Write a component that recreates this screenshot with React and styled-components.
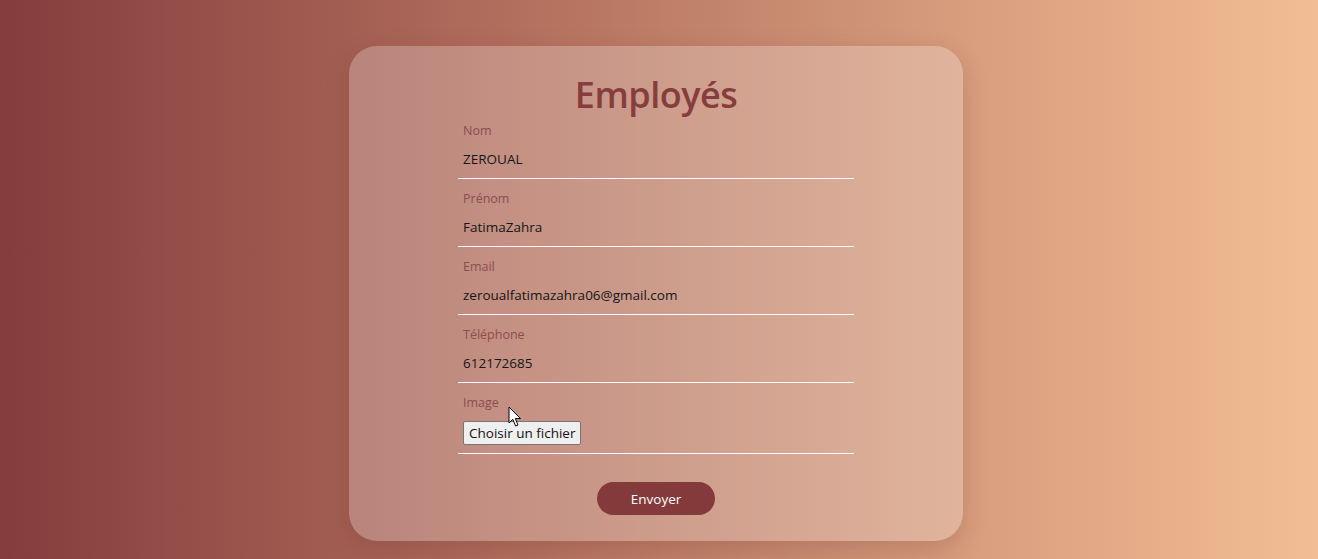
import React from 'react'
import styled, { createGlobalStyle } from 'styled-components'

const GlobalStyle = createGlobalStyle`
  html, body {
    margin: 0;
    padding: 0;
    height: 100%;
  }
  body {
    font-family: "Open Sans", "Noto Sans", sans-serif;
    overflow: hidden;
  }
`

const fields = [
  { label: 'Nom', value: 'ZEROUAL' },
  { label: 'Prénom', value: 'FatimaZahra' },
  { label: 'Email', value: 'zeroualfatimazahra06@gmail.com' },
  { label: 'Téléphone', value: '612172685' },
]

const Cursor = () => (
  <CursorIcon width="14" height="22" viewBox="0 0 14 22">
    <path
      d="M1 1 L1 17 L4.8 13.4 L7.6 20 L10 19 L7.3 12.6 L12.5 12.6 Z"
      fill="#fff"
      stroke="#000"
      strokeWidth="1"
      strokeLinejoin="round"
    />
  </CursorIcon>
)

const App = () => {
  return (
    <Page>
      <GlobalStyle />
      <Card>
        <Title>Employés</Title>
        <Form onSubmit={(e) => e.preventDefault()}>
          {fields.map((f) => (
            <Field key={f.label}>
              <Label>{f.label}</Label>
              <Input defaultValue={f.value} />
            </Field>
          ))}
          <Field>
            <Label>Image</Label>
            <FileButton type="button">Choisir un fichier</FileButton>
            <Cursor />
          </Field>
          <Actions>
            <Submit type="submit">Envoyer</Submit>
          </Actions>
        </Form>
      </Card>
    </Page>
  )
}

export default App

const Page = styled.div`
  width: 100vw;
  height: 100vh;
  box-sizing: border-box;
  padding-top: 46px;
  background: linear-gradient(to right, #853c3d 0%, #b3705e 40%, #d9a07f 75%, #f2bd94 100%);
  display: flex;
  justify-content: center;
  align-items: flex-start;
`

const Card = styled.div`
  width: 614px;
  height: 495px;
  box-sizing: border-box;
  margin-right: 6px;
  padding-top: 33px;
  border-radius: 28px;
  background-color: rgba(255, 255, 255, 0.24);
  box-shadow: 0 8px 24px rgba(90, 30, 30, 0.18);
  display: flex;
  flex-direction: column;
  align-items: center;
`

const Title = styled.h1`
  margin: 0;
  font-size: 36px;
  line-height: 32px;
  font-weight: 600;
  letter-spacing: -0.5px;
  color: #853d3d;
`

const Form = styled.form`
  width: 396px;
  display: flex;
  flex-direction: column;
`

const Field = styled.div`
  position: relative;
  display: flex;
  flex-direction: column;
  align-items: flex-start;
  padding: 12px 5px 9px;
  border-bottom: 1px solid #ffffff;
`

const Label = styled.label`
  font-size: 12.5px;
  line-height: 16px;
  color: #8d4c4e;
  margin-bottom: 10px;
`

const Input = styled.input`
  width: 100%;
  height: 20px;
  padding: 0;
  border: none;
  outline: none;
  background: transparent;
  font-family: "Open Sans", "Noto Sans", sans-serif;
  font-size: 13.5px;
  line-height: 20px;
  color: #161616;
`

const FileButton = styled.button`
  height: 24px;
  padding: 0 5px;
  margin-bottom: -1px;
  border: 1px solid #767676;
  border-radius: 2px;
  background: #efefef;
  font-family: "Open Sans", "Noto Sans", sans-serif;
  font-size: 13.5px;
  color: #111;
`

const CursorIcon = styled.svg`
  position: absolute;
  left: 50px;
  top: 23px;
`

const Actions = styled.div`
  display: flex;
  justify-content: center;
  padding-top: 28px;
`

const Submit = styled.button`
  width: 118px;
  height: 33px;
  border: none;
  border-radius: 17px;
  background: #843a3b;
  color: #ffffff;
  font-family: "Open Sans", "Noto Sans", sans-serif;
  font-size: 13.5px;
  cursor: pointer;
`
